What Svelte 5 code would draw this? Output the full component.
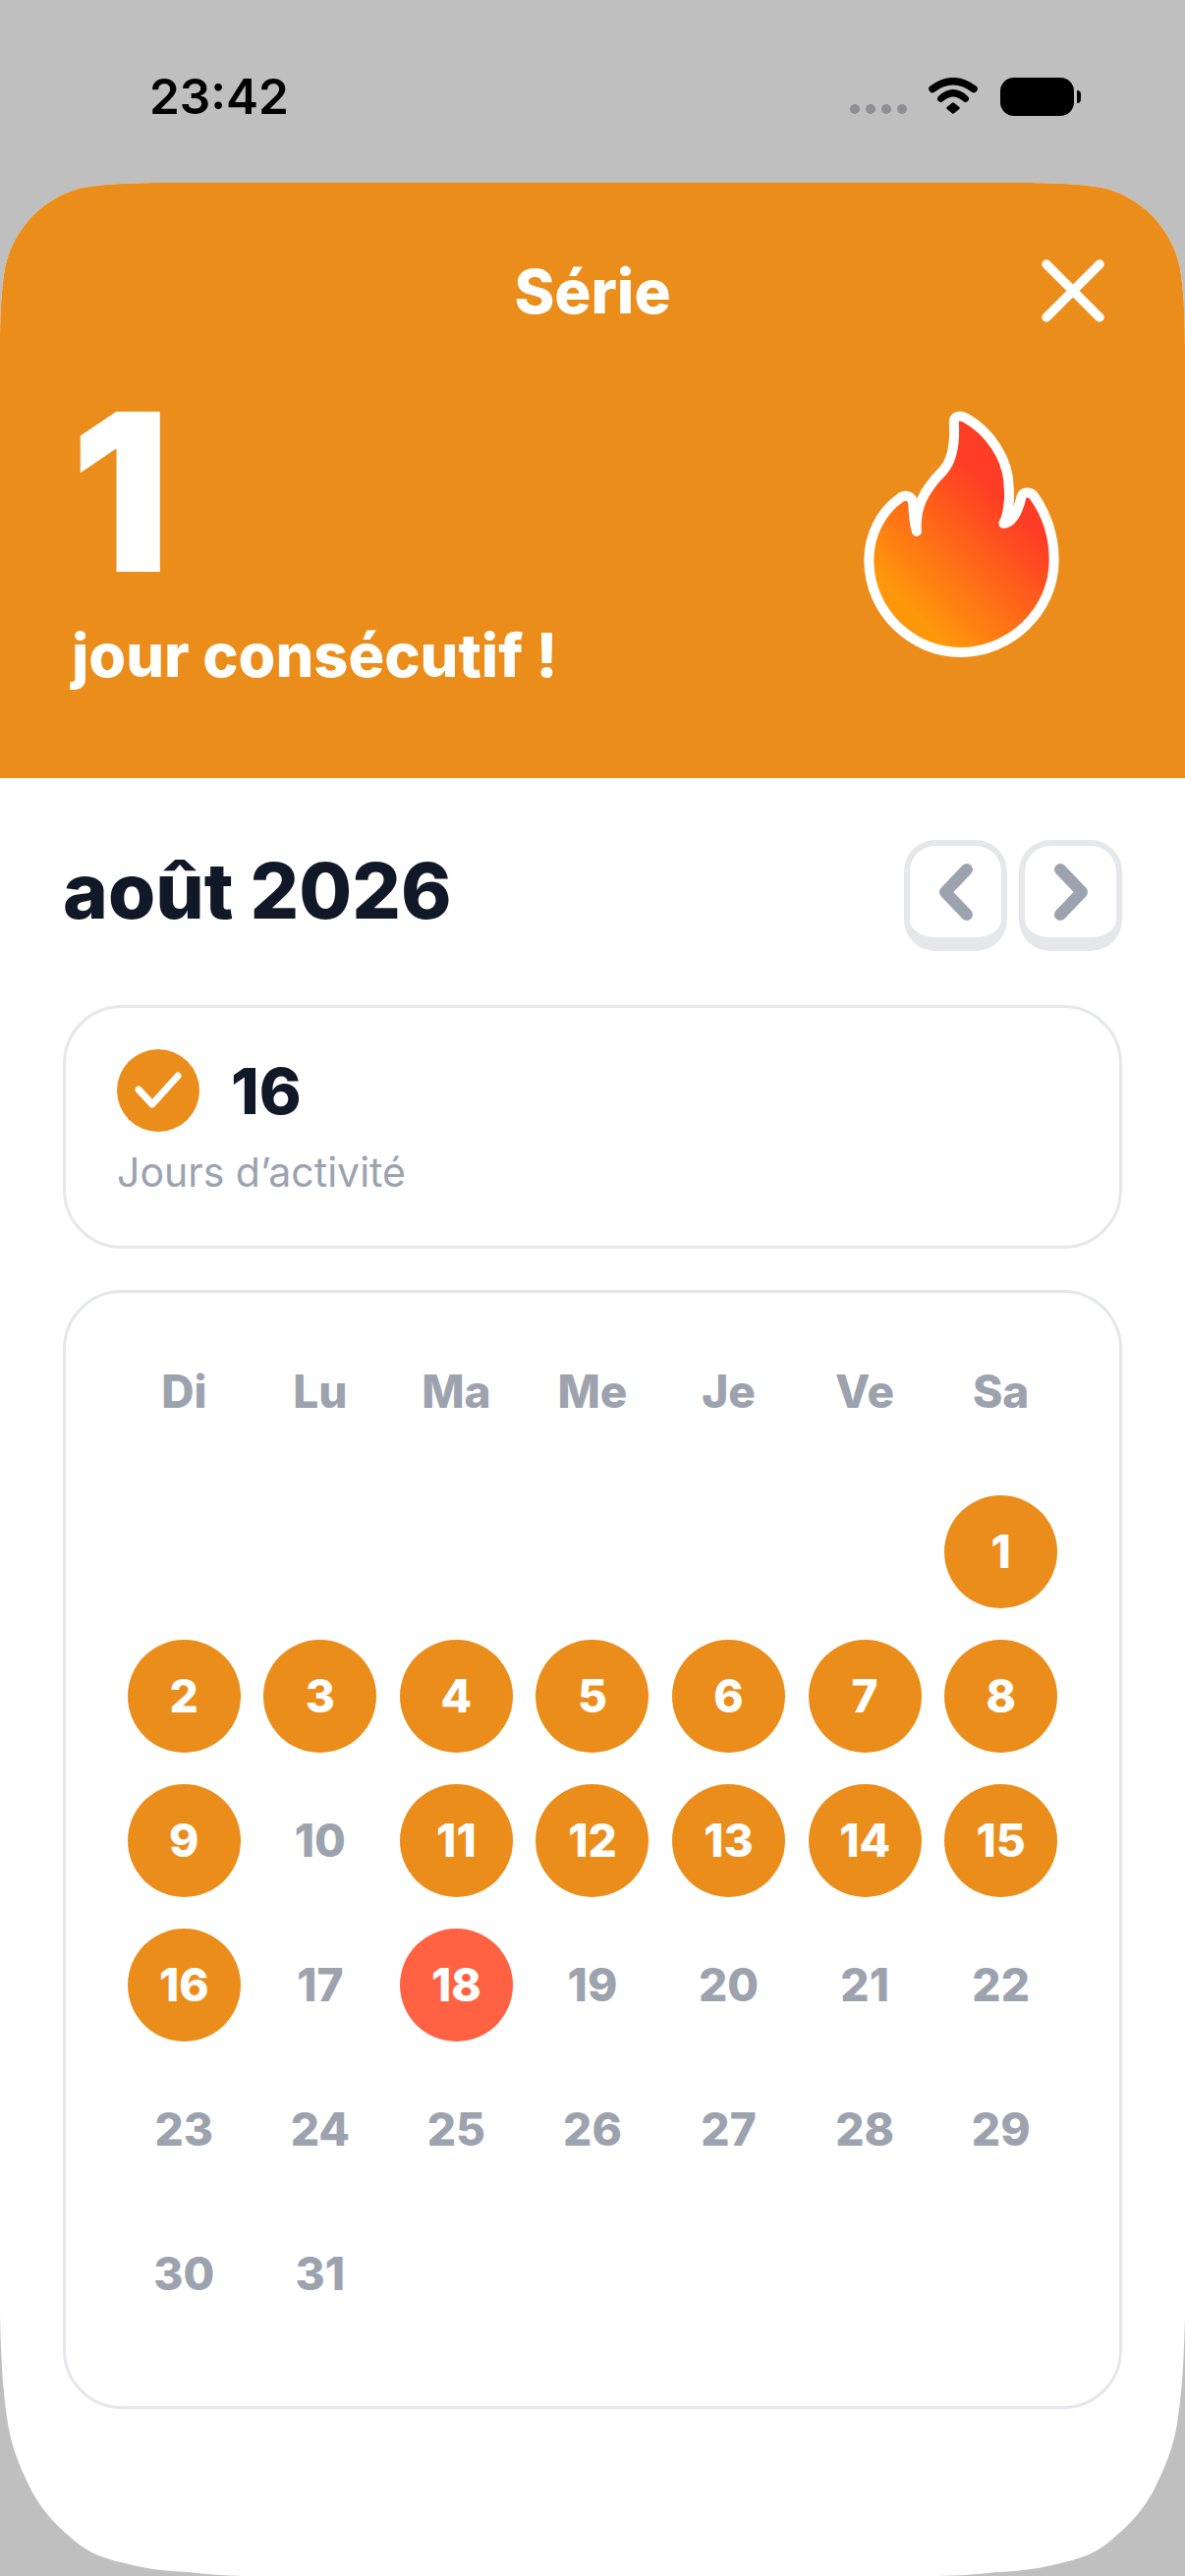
<script>
  const weekdays = ["Di", "Lu", "Ma", "Me", "Je", "Ve", "Sa"];
  const active = [1, 2, 3, 4, 5, 6, 7, 8, 9, 11, 12, 13, 14, 15, 16];
  const today = 18;

  // août 2026 starts on a saturday
  const cells = [
    ...Array(6).fill(null),
    ...Array.from({ length: 31 }, (_, i) => i + 1),
  ];

  function dayClass(day) {
    if (day === today) return "day today";
    if (active.includes(day)) return "day done";
    return "day";
  }
</script>

<div class="screen">
  <div class="status">
    <span class="time">23:42</span>
    <div class="status-icons">
      <div class="dots">
        <i></i><i></i><i></i><i></i>
      </div>
      <svg class="wifi" viewBox="0 0 50 38" width="50" height="38">
        <path d="M4 11.500 Q25 -4 46 11.500" fill="none" stroke="#000" stroke-width="7.500" stroke-linecap="round" />
        <path d="M12.500 21.500 Q25 10 37.500 21.500" fill="none" stroke="#000" stroke-width="7" stroke-linecap="round" />
        <path d="M19.500 31 L25 26.500 L30.500 31 L25 35.500 Z" fill="#000" stroke="#000" stroke-width="2.500" stroke-linejoin="round" />
      </svg>
      <div class="battery"></div>
    </div>
  </div>

  <div class="sheet">
    <header class="hero">
      <div class="hero-top">
        <h1>Série</h1>
        <svg class="close" viewBox="0 0 66 66" width="66" height="66">
          <path d="M6 6 L60 60 M60 6 L6 60" fill="none" stroke="#fff" stroke-width="9.500" stroke-linecap="round" />
        </svg>
      </div>
      <div class="hero-body">
        <div class="streak">
          <div class="count">1</div>
          <div class="label">jour consécutif !</div>
        </div>
        <svg class="flame" viewBox="230 105 610 770" width="203" height="257">
          <defs>
            <linearGradient id="fire" gradientUnits="userSpaceOnUse" x1="370" y1="710" x2="680" y2="400">
              <stop offset="0" stop-color="#ff970b" />
              <stop offset="1" stop-color="#ff3c25" />
            </linearGradient>
          </defs>
          <path
            d="M512 150 C510 130 530 125 548 135 C620 175 680 260 680 350 C683 385 678 430 664 458 C690 455 708 420 718 378 C722 360 745 360 755 372 C790 420 818 490 818 570 C818 730 680 852 532 852 C385 852 252 730 252 570 C252 490 290 420 350 378 C365 368 384 375 387 395 C388 425 391 460 398 482 C392 410 420 355 480 295 C510 260 515 200 512 150 Z"
            fill="url(#fire)"
            stroke="#fff"
            stroke-width="30"
            stroke-linejoin="round"
          />
        </svg>
      </div>
    </header>

    <main class="content">
      <div class="month-row">
        <h2>août 2026</h2>
        <div class="nav">
          <button class="nav-btn" aria-label="Mois précédent">
            <svg viewBox="0 0 40 60" width="40" height="60">
              <path d="M31 7 L9 30 L31 53" fill="none" stroke="#9ca3af" stroke-width="12" stroke-linecap="round" stroke-linejoin="round" />
            </svg>
          </button>
          <button class="nav-btn" aria-label="Mois suivant">
            <svg viewBox="0 0 40 60" width="40" height="60">
              <path d="M9 7 L31 30 L9 53" fill="none" stroke="#9ca3af" stroke-width="12" stroke-linecap="round" stroke-linejoin="round" />
            </svg>
          </button>
        </div>
      </div>

      <section class="card stat">
        <div class="stat-top">
          <span class="check">
            <svg viewBox="0 0 84 84" width="84" height="84">
              <path d="M22 41 L36 56 L62 27" fill="none" stroke="#fff" stroke-width="7" stroke-linecap="round" stroke-linejoin="round" />
            </svg>
          </span>
          <span class="stat-value">16</span>
        </div>
        <p class="stat-label">Jours d’activité</p>
      </section>

      <section class="card calendar">
        <div class="weekdays">
          {#each weekdays as name}
            <span>{name}</span>
          {/each}
        </div>
        <div class="days">
          {#each cells as day}
            {#if day}
              <span class={dayClass(day)}>{day}</span>
            {:else}
              <span class="day"></span>
            {/if}
          {/each}
        </div>
      </section>
    </main>
  </div>
</div>

<style>
  :global(body) {
    margin: 0;
    background: #bfbfbf;
  }

  .screen {
    width: 1206px;
    height: 2622px;
    overflow: hidden;
    background: #bfbfbf;
    font-family: Inter, "Liberation Sans", sans-serif;
  }

  .status {
    height: 186px;
    box-sizing: border-box;
    padding: 66px 113px 0 152px;
    display: flex;
    justify-content: space-between;
    align-items: flex-start;
  }

  .time {
    font-size: 49.500px;
    font-weight: 600;
    line-height: 64px;
    color: #000;
  }

  .status-icons {
    display: flex;
    align-items: flex-start;
    padding-top: 13px;
  }

  .dots {
    display: flex;
    gap: 6px;
    margin-top: 27px;
    margin-right: 22px;
  }

  .dots i {
    width: 10px;
    height: 10px;
    border-radius: 50%;
    background: #8e8e93;
  }

  .wifi {
    margin-right: 23px;
  }

  .battery {
    position: relative;
    width: 75px;
    height: 39px;
    border-radius: 14px;
    background: #000;
  }

  .battery::after {
    content: "";
    position: absolute;
    right: -7px;
    top: 13px;
    width: 4px;
    height: 13px;
    border-radius: 0 5px 5px 0;
    background: #000;
  }

  .sheet {
    height: 2436px;
    background: #fff;
    clip-path: path("M0 170 C0 130 2 105 5 87 C9 68 18 50 33 34 C46 21 60 12 80 6 C100 1.500 135 0 170 0 L1036 0 C1071 0 1106 1.500 1126 6 C1146 12 1160 21 1173 34 C1188 50 1197 68 1201 87 C1204 105 1206 130 1206 170 L1206 2171 C1205 2215 1203 2250 1198 2281 C1194 2305 1186 2325 1175 2347 C1162 2372 1148 2385 1129 2401 C1116 2412 1101 2418 1083 2422 C1061 2428 1041 2431 1014 2432 C991 2435 966 2436 945 2436 L261 2436 C240 2436 215 2435 192 2432 C165 2431 145 2428 123 2422 C105 2418 90 2412 77 2401 C58 2385 44 2372 31 2347 C20 2325 12 2305 8 2281 C3 2250 1 2215 0 2171 Z");
  }

  .hero {
    height: 606px;
    box-sizing: border-box;
    background: #eb8d1a;
    color: #fff;
    padding: 0 72px;
  }

  .hero-top {
    position: relative;
    height: 225px;
    display: flex;
    justify-content: center;
    align-items: flex-start;
  }

  h1 {
    margin: 75px 0 0;
    font-size: 62px;
    font-weight: 800;
    line-height: 72px;
  }

  .close {
    position: absolute;
    top: 77px;
    right: 9px;
  }

  .hero-body {
    display: flex;
    justify-content: space-between;
    align-items: flex-start;
  }

  .streak {
    margin-top: -40px;
  }

  .count {
    font-size: 224px;
    font-weight: 900;
    line-height: 260px;
  }

  .label {
    font-size: 61.200px;
    font-weight: 800;
    line-height: 72px;
    margin-left: 1px;
  }

  .flame {
    margin-top: 4px;
    margin-right: 54px;
    filter: blur(0.7px);
  }

  .content {
    padding: 0 64px;
  }

  .month-row {
    height: 231px;
    box-sizing: border-box;
    padding-top: 65px;
    display: flex;
    justify-content: space-between;
    align-items: flex-start;
  }

  h2 {
    margin: 0;
    font-size: 78px;
    font-weight: 800;
    line-height: 100px;
    color: #111827;
  }

  .nav {
    display: flex;
    gap: 12px;
    margin-top: -2px;
  }

  .nav-btn {
    width: 105px;
    height: 113px;
    box-sizing: border-box;
    padding: 0;
    display: flex;
    align-items: center;
    justify-content: center;
    background: #fff;
    border: 6px solid #e5e7eb;
    border-bottom-width: 14px;
    border-radius: 32px;
  }

  .card {
    box-sizing: border-box;
    border: 3px solid #e5e7eb;
    border-radius: 60px;
    background: #fff;
  }

  .stat {
    height: 248px;
    padding: 42px 52px 0;
  }

  .stat-top {
    display: flex;
    align-items: center;
    gap: 32px;
  }

  .check {
    width: 84px;
    height: 84px;
    border-radius: 50%;
    background: #eb8d1a;
  }

  .check svg {
    display: block;
  }

  .stat-value {
    font-size: 65px;
    font-weight: 800;
    color: #111827;
  }

  .stat-label {
    margin: 17px 0 0;
    font-size: 41px;
    line-height: 48px;
    color: #9ca3af;
  }

  .calendar {
    height: 1139px;
    margin-top: 42px;
    padding: 72px 51px 0;
  }

  .weekdays,
  .days {
    display: grid;
    grid-template-columns: repeat(7, 1fr);
  }

  .weekdays {
    margin-bottom: 78px;
  }

  .weekdays span {
    text-align: center;
    font-size: 46px;
    font-weight: 800;
    line-height: 56px;
    color: #9ca3af;
  }

  .days {
    row-gap: 32px;
  }

  .day {
    width: 115px;
    height: 115px;
    box-sizing: border-box;
    padding-bottom: 2px;
    justify-self: center;
    display: flex;
    align-items: center;
    justify-content: center;
    border-radius: 50%;
    font-size: 46px;
    font-weight: 800;
    color: #9ca3af;
  }

  .done {
    background: #eb8d1a;
    color: #fff;
  }

  .today {
    background: #ff6242;
    color: #fff;
  }
</style>
